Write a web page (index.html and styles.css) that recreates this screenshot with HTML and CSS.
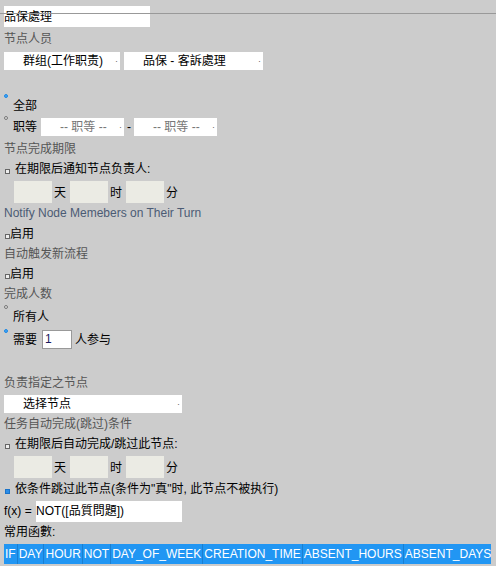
FILE: index.html
```html
<!DOCTYPE html>
<html lang="zh">
<head>
    <meta charset="UTF-8">
    <title>节点设置</title>
    <link rel="stylesheet" href="styles.css">
</head>
<body>
    <div class="top-line"></div>
    <div class="panel">
        <div class="name-box">品保處理</div>

        <div class="label row-20 first-label">节点人员</div>
        <div class="select-row">
            <div class="select wide">群组(工作职责)<span class="arrow">·</span></div>
            <div class="select wider">品保 - 客訴處理<span class="arrow">·</span></div>
        </div>

        <div class="radio-row first-radio">
            <span class="radio on"></span>
            <span class="opt">全部</span>
        </div>
        <div class="radio-row grade-row">
            <span class="radio"></span>
            <span class="opt">职等</span>
            <div class="select grade">-- 职等 --<span class="arrow">·</span></div>
            <span class="dash">-</span>
            <div class="select grade">-- 职等 --<span class="arrow">·</span></div>
        </div>

        <div class="label row-20">节点完成期限</div>
        <div class="check-row">
            <span class="check"></span>
            <span class="opt">在期限后通知节点负责人:</span>
        </div>
        <div class="time-row">
            <span class="time-box"></span><span class="unit">天</span>
            <span class="time-box"></span><span class="unit">时</span>
            <span class="time-box"></span><span class="unit">分</span>
        </div>

        <div class="notify">Notify Node Memebers on Their Turn</div>
        <div class="check-row tight">
            <span class="check"></span>
            <span class="opt">启用</span>
        </div>
        <div class="label row-20">自动触发新流程</div>
        <div class="check-row tight">
            <span class="check"></span>
            <span class="opt">启用</span>
        </div>

        <div class="label row-20">完成人数</div>
        <div class="radio-row all-row">
            <span class="radio"></span>
            <span class="opt">所有人</span>
        </div>
        <div class="radio-row need-row">
            <span class="radio on"></span>
            <span class="opt">需要</span>
            <span class="count-box">1</span>
            <span class="opt">人参与</span>
        </div>

        <div class="label row-20 spaced">负责指定之节点</div>
        <div class="select node">选择节点<span class="arrow">·</span></div>

        <div class="label row-20">任务自动完成(跳过)条件</div>
        <div class="check-row">
            <span class="check"></span>
            <span class="opt">在期限后自动完成/跳过此节点:</span>
        </div>
        <div class="time-row">
            <span class="time-box"></span><span class="unit">天</span>
            <span class="time-box"></span><span class="unit">时</span>
            <span class="time-box"></span><span class="unit">分</span>
        </div>
        <div class="check-row cond">
            <span class="check on"></span>
            <span class="opt">依条件跳过此节点(条件为"真"时, 此节点不被执行)</span>
        </div>
        <div class="formula-row">
            <span class="opt fx">f(x) =</span>
            <div class="formula">NOT([品質問題])</div>
        </div>

        <div class="opt row-20">常用函數:</div>
        <div class="func-bar">
            <span>IF</span><span>DAY</span><span>HOUR</span><span>NOT</span><span>DAY_OF_WEEK</span><span>CREATION_TIME</span><span>ABSENT_HOURS</span><span>ABSENT_DAYS</span>
        </div>
    </div>
</body>
</html>
```

FILE: styles.css
```css
* {
    margin: 0;
    padding: 0;
    box-sizing: border-box;
}

body {
    font-family: 'Liberation Sans', Arial, 'Noto Sans CJK SC', sans-serif;
    font-size: 12px;
    background: #cccccc;
    color: #000;
    position: relative;
}

.panel {
    padding: 6px 4px 0 4px;
}

.top-line {
    position: absolute;
    left: 0;
    right: 0;
    top: 13px;
    height: 1px;
    background: #999;
}

.name-box {
    width: 146px;
    height: 21px;
    background: #fff;
    line-height: 22px;
}

.label {
    color: #555;
}

.row-20 {
    height: 20px;
    line-height: 20px;
}

.first-label {
    margin-top: 2px;
}

.select {
    background: #fff;
    height: 18px;
    line-height: 18px;
    padding-left: 19px;
    position: relative;
    white-space: nowrap;
}

.select .arrow {
    position: absolute;
    right: 2px;
    top: 0;
    color: #666;
    font-size: 9px;
}

.select-row {
    display: flex;
    gap: 4px;
    margin-top: 3px;
}

.select.wide {
    width: 116px;
}

.select.wider {
    width: 139px;
}

.radio-row {
    display: flex;
    align-items: flex-start;
}

.radio {
    width: 4px;
    height: 4px;
    border-radius: 50%;
    border: 1px solid #777;
    background: #ddd;
    margin-right: 5px;
    flex: none;
}

.radio.on {
    border-color: #1e88e5;
    background: #42a5f5;
}

.first-radio {
    margin-top: 24px;
    height: 21px;
}

.first-radio .opt {
    margin-top: 3px;
    line-height: 18px;
}

.grade-row {
    height: 23px;
    margin-top: 1px;
}

.grade-row .opt {
    line-height: 20px;
    margin-top: 1px;
    width: 28px;
}

.select.grade {
    width: 83px;
    margin-top: 2px;
    color: #777;
}

.dash {
    width: 10px;
    text-align: center;
    line-height: 20px;
    margin-top: 1px;
}

.check-row {
    display: flex;
    align-items: flex-end;
    height: 20px;
    line-height: 20px;
}

.check {
    width: 5px;
    height: 5px;
    border: 1px solid #666;
    background: #eee;
    margin: 0 5px 5px 1px;
    flex: none;
}

.check.on {
    background: #2b8de8;
    border-color: #1a73c9;
}

.check-row.tight .check {
    margin-right: 0;
}

.time-row {
    display: flex;
    align-items: center;
    height: 23px;
    padding-left: 10px;
    margin-top: 1px;
}

.time-box {
    width: 38px;
    height: 22px;
    background: #ebebe4;
}

.unit {
    width: 18px;
    padding-left: 2px;
}

.notify {
    color: #4b5b74;
    height: 18px;
    line-height: 18px;
    margin-top: 1px;
    margin-bottom: 2px;
}

.all-row {
    height: 22px;
    margin-top: 1px;
}

.all-row .opt {
    line-height: 20px;
    margin-top: 2px;
}

.need-row {
    height: 22px;
    margin-top: 2px;
}

.need-row .opt {
    line-height: 20px;
    margin-top: 1px;
}

.count-box {
    width: 30px;
    height: 19px;
    margin: 1px 3px 0 5px;
    background: #fff;
    border: 1px solid #999;
    color: #1a1a5e;
    line-height: 17px;
    padding-left: 2px;
}

.spaced {
    margin-top: 22px;
}

.select.node {
    width: 178px;
    margin-top: 2px;
    margin-bottom: 1px;
}

.cond {
    margin-top: 1px;
}

.formula-row {
    display: flex;
    align-items: center;
    height: 22px;
    margin-top: 1px;
}

.fx {
    width: 32px;
}

.formula {
    background: #fff;
    width: 146px;
    height: 21px;
    line-height: 21px;
}

.func-bar {
    display: flex;
    width: 487px;
    height: 20px;
    margin-top: 2px;
    background: #2196f3;
}

.func-bar span {
    color: #fff;
    line-height: 20px;
    padding: 0 1px;
    border-right: 1px solid #1a7fd0;
    white-space: nowrap;
}

.func-bar span:last-child {
    border-right: none;
}
```
